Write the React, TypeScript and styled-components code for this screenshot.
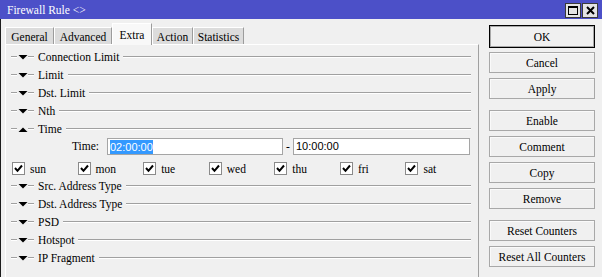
import React from 'react';
import styled, { createGlobalStyle } from 'styled-components';

const GlobalStyle = createGlobalStyle`
  html, body {
    margin: 0;
    padding: 0;
    background: #f0f0f0;
    overflow: hidden;
  }
  body {
    font-family: "Liberation Serif", "Times New Roman", serif;
    font-size: 11.5px;
    color: #000;
  }
`;

// Window frame
const Window = styled.div`
  width: 602px;
  height: 277px;
  display: flex;
  flex-direction: column;
  background: #f0f0f0;
  overflow: hidden;
`;

const TitleBar = styled.div`
  height: 19px;
  flex: none;
  display: flex;
  align-items: center;
  justify-content: space-between;
  background: #4c50c8;
  color: #fff;
  padding-left: 7px;
  padding-right: 4px;
`;

const TitleText = styled.span`
  font-size: 11.5px;
  line-height: 19px;
  padding-top: 2px;
`;

const TitleControls = styled.div`
  display: flex;
  gap: 1px;
  padding-top: 2px;
`;

const TitleButton = styled.div`
  width: 14px;
  height: 13px;
  background: #e4e4e4;
  border: 1px solid #3a3a3a;
  display: flex;
  align-items: center;
  justify-content: center;
`;

const Body = styled.div`
  flex: 1;
  display: flex;
  border-left: 1px solid #1c1c1c;
  min-height: 0;
`;

// Left side: tabs + panel
const LeftPane = styled.div`
  width: 474px;
  margin-left: 4px;
  padding-top: 4px;
  display: flex;
  flex-direction: column;
`;

const TabStrip = styled.div`
  height: 21px;
  display: flex;
  align-items: flex-end;
  position: relative;
  z-index: 1;
`;

const Tab = styled.div<{ $active?: boolean; $width: number }>`
  box-sizing: border-box;
  width: ${p => p.$width}px;
  height: ${p => (p.$active ? 22 : 17)}px;
  margin-bottom: ${p => (p.$active ? -1 : 0)}px;
  background: ${p => (p.$active ? '#f8f8f8' : '#dcdcdc')};
  border: 1px solid;
  border-color: #fff #9c9c9c transparent #fff;
  border-bottom: none;
  display: flex;
  align-items: center;
  justify-content: center;
  line-height: 14px;
  padding-top: ${p => (p.$active ? 0 : 1)}px;
`;

const Panel = styled.div`
  flex: 1;
  background: #f0f0f0;
  border-top: 1px solid #fff;
  border-left: 1px solid #fff;
  border-right: 1px solid #a0a0a0;
  padding: 3px 7px 0 5px;
`;

const SectionRow = styled.div`
  height: 18px;
  display: flex;
  align-items: center;
`;

const Etched = styled.div<{ $width?: number }>`
  box-sizing: border-box;
  height: 2px;
  border-top: 1px solid #a0a0a0;
  border-bottom: 1px solid #fff;
  ${p => (p.$width ? `width: ${p.$width}px; flex: none;` : 'flex: 1;')}
`;

const Arrow = styled.svg`
  width: 10px;
  height: 5px;
  margin: 0 0 0 1px;
  flex: none;
`;

const SectionLabel = styled.span`
  margin: 0 4px 0 4px;
  line-height: 18px;
  white-space: nowrap;
`;

// Time inputs
const TimeRow = styled.div`
  height: 18px;
  display: flex;
  align-items: flex-start;
`;

const FieldLabel = styled.span`
  width: 88px;
  margin-right: 8px;
  text-align: right;
  line-height: 17px;
`;

const TextInput = styled.div<{ $width: number }>`
  box-sizing: border-box;
  width: ${p => p.$width}px;
  height: 17px;
  background: #fff;
  border: 1px solid #a5a5a5;
  padding: 1px 0 0 2px;
  font-family: "Liberation Sans", Arial, sans-serif;
  font-size: 11px;
  line-height: 13px;
`;

const Selected = styled.span`
  background: #3399ff;
  color: #fff;
  display: inline-block;
  line-height: 14px;
`;

const Dash = styled.span`
  width: 10px;
  text-align: center;
  line-height: 16px;
`;

// Day checkboxes
const DayRow = styled.div`
  height: 21px;
  padding-top: 6px;
  box-sizing: border-box;
  display: flex;
  padding-left: 1px;
`;

const DayItem = styled.label`
  width: 66px;
  display: flex;
  align-items: center;
  height: 13px;
`;

const CheckBox = styled.span`
  box-sizing: border-box;
  width: 13px;
  height: 13px;
  border: 1px solid #8a8a8a;
  background: #fff;
  display: flex;
  align-items: center;
  justify-content: center;
  margin-right: 5px;
`;

// Right-hand buttons
const ButtonColumn = styled.div`
  width: 106px;
  margin-left: 10px;
  padding-top: 6px;
  display: flex;
  flex-direction: column;
`;

const Button = styled.div<{ $primary?: boolean; $groupEnd?: boolean }>`
  box-sizing: border-box;
  height: ${p => (p.$primary ? 23 : 21)}px;
  margin-bottom: ${p => (p.$primary ? 4 : p.$groupEnd ? 11 : 5)}px;
  border: 1px solid ${p => (p.$primary ? '#000' : '#a8a8a8')};
  box-shadow: ${p => (p.$primary ? 'inset 0 0 0 1px #a8a8a8' : 'inset 1px 1px 0 #fafafa')};
  background: #f0f0f0;
  display: flex;
  align-items: center;
  justify-content: center;
  white-space: nowrap;
`;

const collapsed = ['Connection Limit', 'Limit', 'Dst. Limit', 'Nth'];
const after = ['Src. Address Type', 'Dst. Address Type', 'PSD', 'Hotspot', 'IP Fragment'];
const days = ['sun', 'mon', 'tue', 'wed', 'thu', 'fri', 'sat'];

const tabs = [
  { label: 'General', width: 49 },
  { label: 'Advanced', width: 58 },
  { label: 'Extra', width: 40, active: true },
  { label: 'Action', width: 41 },
  { label: 'Statistics', width: 51 },
];

const Section: React.FC<{ label: string; open?: boolean }> = ({ label, open }) => (
  <SectionRow>
    <Etched $width={6} />
    <Arrow viewBox="0 0 10 5">
      {open ? <polygon points="0.5,5 9.5,5 5,0.5" fill="#000" /> : <polygon points="0.5,0 9.5,0 5,4.5" fill="#000" />}
    </Arrow>
    <Etched $width={6} />
    <SectionLabel>{label}</SectionLabel>
    <Etched />
  </SectionRow>
);

const Check = () => (
  <svg width="9" height="9" viewBox="0 0 9 9">
    <polyline points="1,4 3.5,6.8 8,1.5" fill="none" stroke="#000" strokeWidth="2" />
  </svg>
);

const App: React.FC = () => {
  return (
    <Window>
      <GlobalStyle />
      <TitleBar>
        <TitleText>Firewall Rule &lt;&gt;</TitleText>
        <TitleControls>
          <TitleButton>
            <svg width="10" height="9" viewBox="0 0 10 9">
              <rect x="0.5" y="0.5" width="9" height="8" fill="none" stroke="#000" />
              <line x1="0" y1="1.5" x2="10" y2="1.5" stroke="#000" />
            </svg>
          </TitleButton>
          <TitleButton>
            <svg width="9" height="9" viewBox="0 0 9 9">
              <path d="M1 1 L8 8 M8 1 L1 8" stroke="#000" strokeWidth="2" />
            </svg>
          </TitleButton>
        </TitleControls>
      </TitleBar>
      <Body>
        <LeftPane>
          <TabStrip>
            {tabs.map(t => (
              <Tab key={t.label} $width={t.width} $active={t.active}>
                {t.label}
              </Tab>
            ))}
          </TabStrip>
          <Panel>
            {collapsed.map(l => (
              <Section key={l} label={l} />
            ))}
            <Section label="Time" open />
            <TimeRow>
              <FieldLabel>Time:</FieldLabel>
              <TextInput $width={176}>
                <Selected>02:00:00</Selected>
              </TextInput>
              <Dash>-</Dash>
              <TextInput $width={177}>10:00:00</TextInput>
            </TimeRow>
            <DayRow>
              {days.map(d => (
                <DayItem key={d}>
                  <CheckBox>
                    <Check />
                  </CheckBox>
                  {d}
                </DayItem>
              ))}
            </DayRow>
            {after.map(l => (
              <Section key={l} label={l} />
            ))}
          </Panel>
        </LeftPane>
        <ButtonColumn>
          <Button $primary>OK</Button>
          <Button>Cancel</Button>
          <Button $groupEnd>Apply</Button>
          <Button>Enable</Button>
          <Button>Comment</Button>
          <Button>Copy</Button>
          <Button $groupEnd>Remove</Button>
          <Button>Reset Counters</Button>
          <Button>Reset All Counters</Button>
        </ButtonColumn>
      </Body>
    </Window>
  );
};

export default App;
